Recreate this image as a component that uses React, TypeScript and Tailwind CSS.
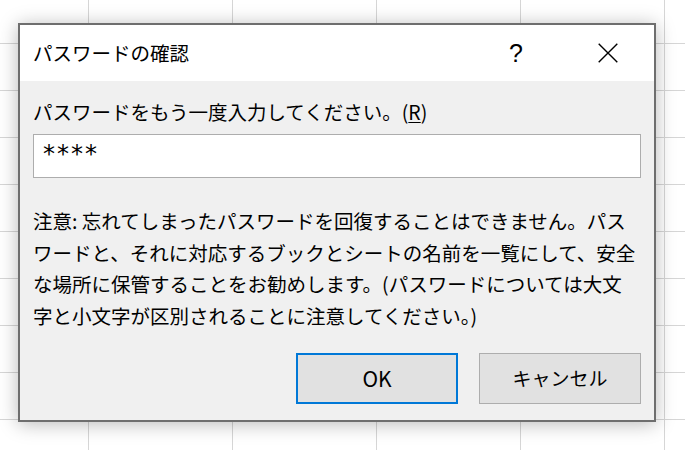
import React from 'react';

const jp = "font-['Noto_Sans_CJK_JP',sans-serif]";

const noteLines = [
  '注意: 忘れてしまったパスワードを回復することはできません。パス',
  'ワードと、それに対応するブックとシートの名前を一覧にして、安全',
  'な場所に保管することをお勧めします。(パスワードについては大文',
  '字と小文字が区別されることに注意してください。)',
];

// spreadsheet cells behind the dialog
function SheetGrid() {
  return (
    <div className="grid grid-cols-[89px_repeat(5,144px)] grid-rows-[44px_repeat(9,47px)]">
      {Array.from({ length: 60 }).map((_, i) => (
        <div key={i} className="border-r border-b border-[#d6d6d6]" />
      ))}
    </div>
  );
}

function CloseIcon() {
  return (
    <svg width="20" height="20" viewBox="0 0 20 20" fill="none" stroke="#000" strokeWidth="1.4">
      <path d="M0.7 0.7 L19.3 19.3 M19.3 0.7 L0.7 19.3" />
    </svg>
  );
}

export default function App() {
  return (
    <div className={`relative w-[685px] h-[450px] overflow-hidden bg-white text-black ${jp}`}>
      <SheetGrid />

      {/* Dialog */}
      <div className="absolute left-[18px] top-[23px] w-[638px] h-[399px] border-2 border-[#6e6e6e] flex flex-col shadow-[0_2px_18px_rgba(0,0,0,0.28)]">
        <div className="flex h-[56px] items-center bg-white">
          <span className="pl-[13px] text-[19.5px] leading-none">パスワードの確認</span>
          <div className="ml-auto flex h-full">
            <button className="flex w-[92px] h-full items-center justify-center font-['Liberation_Sans',sans-serif] text-[25px] leading-none">
              ?
            </button>
            <button className="flex w-[92px] h-full items-center justify-center">
              <CloseIcon />
            </button>
          </div>
        </div>

        <div className="flex-1 bg-[#f0f0f0] px-[13px] pt-[17px]">
          <div className="text-[19.5px] leading-[28px] whitespace-nowrap">
            パスワードをもう一度入力してください。(<span className="underline underline-offset-2">R</span>)
          </div>

          <div className="mt-2 flex h-[44px] items-center border border-[#adadad] bg-white pl-[9px]">
            <span className="font-['DejaVu_Sans',sans-serif] text-[24px] leading-none tracking-[2px] -mt-1">****</span>
          </div>

          <div className="mt-[27px] text-[19.5px] leading-[31.5px]">
            {noteLines.map((line) => (
              <div key={line} className="whitespace-nowrap">
                {line}
              </div>
            ))}
          </div>

          <div className="mt-[22px] flex justify-end gap-[21px]">
            <button className="flex w-[162px] h-[51px] items-center justify-center border-2 border-[#0078d7] bg-[#e1e1e1] text-[21px]">
              OK
            </button>
            <button className="flex w-[162px] h-[51px] items-center justify-center border border-[#adadad] bg-[#e1e1e1] text-[19px]">
              キャンセル
            </button>
          </div>
        </div>
      </div>
    </div>
  );
}
